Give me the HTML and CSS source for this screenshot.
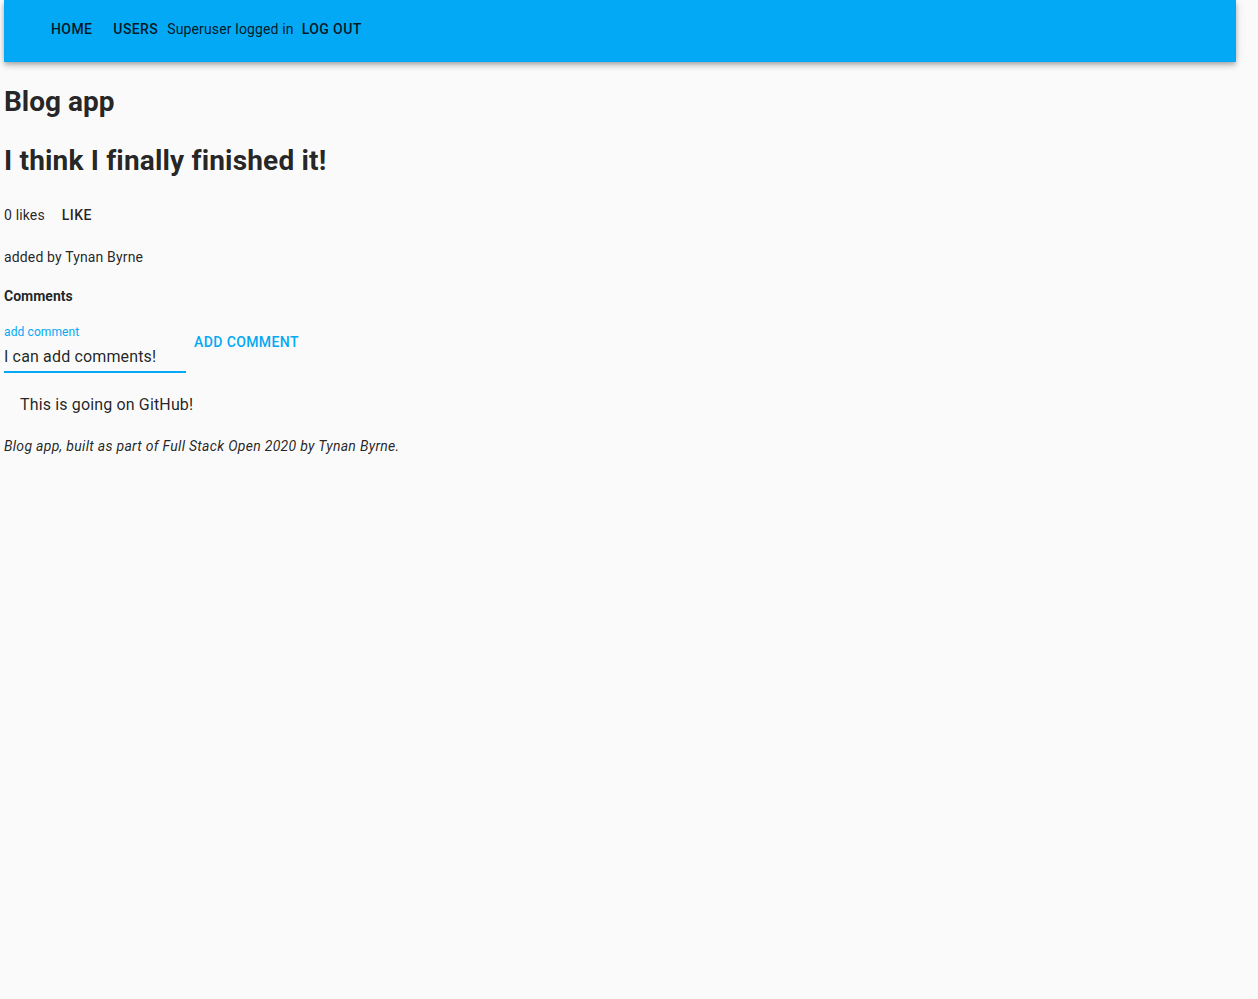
FILE: index.html
```html
<!DOCTYPE html>
<html lang="en">
<head>
<meta charset="utf-8">
<title>Blog app</title>
<link rel="stylesheet" href="styles.css">
</head>
<body>
<div class="page">
  <header class="appbar">
    <nav class="toolbar">
      <a class="btn nav-home" href="#">Home</a>
      <a class="btn nav-users" href="#">Users</a>
      <span class="user-info">Superuser logged in</span>
      <button class="btn nav-logout" type="button">Log out</button>
    </nav>
  </header>

  <h1 class="app-title">Blog app</h1>
  <h2 class="blog-title">I think I finally finished it!</h2>

  <div class="likes-row">
    <span class="likes">0 likes</span>
    <button class="btn like-btn" type="button">Like</button>
  </div>

  <div class="added-by">added by Tynan Byrne</div>

  <h3 class="comments-title">Comments</h3>

  <form class="comment-form">
    <div class="field">
      <label class="field-label" for="comment">add comment</label>
      <input class="field-input" id="comment" type="text" value="I can add comments!">
    </div>
    <button class="btn add-btn" type="button">Add comment</button>
  </form>

  <ul class="comment-list">
    <li class="comment-item">This is going on GitHub!</li>
  </ul>

  <footer class="footer">Blog app, built as part of Full Stack Open 2020 by Tynan Byrne.</footer>
</div>
</body>
</html>
```

FILE: styles.css
```css
html, body {
  margin: 0;
  padding: 0;
  background: #fafafa;
}

body {
  font-family: Roboto, "Liberation Sans", Arial, sans-serif;
  color: rgba(0, 0, 0, 0.87);
  font-variant-ligatures: none;
}

.page {
  padding: 0 22px 0 4px;
}

.appbar {
  background: #03a9f4;
  height: 62px;
  box-shadow: 0 2px 4px -1px rgba(0, 0, 0, 0.2),
              0 4px 5px 0 rgba(0, 0, 0, 0.14),
              0 1px 10px 0 rgba(0, 0, 0, 0.12);
}

.toolbar {
  height: 62px;
  box-sizing: border-box;
  display: flex;
  align-items: center;
  padding: 0 0 4px 39px;
  font-size: 14px;
  line-height: 20px;
}

.btn {
  font-family: inherit;
  font-size: 14px;
  font-weight: 500;
  line-height: 20px;
  letter-spacing: 0.02857em;
  text-transform: uppercase;
  text-decoration: none;
  color: rgba(0, 0, 0, 0.87);
  background: none;
  border: 0;
  padding: 0 8px;
  margin: 0;
  cursor: pointer;
}

.nav-users {
  margin-left: 5px;
}

.user-info {
  margin-left: 1px;
  font-weight: 400;
  letter-spacing: 0.01071em;
}

.nav-logout {
  margin-left: 0;
}

.app-title,
.blog-title {
  font-size: 28px;
  font-weight: 700;
  line-height: 34px;
  margin: 0;
}

.app-title {
  margin-top: 23px;
}

.blog-title {
  margin-top: 25px;
  letter-spacing: 0.006em;
}

.likes-row {
  display: flex;
  align-items: baseline;
  margin-top: 27px;
  font-size: 14px;
  line-height: 20px;
  letter-spacing: 0.01071em;
}

.like-btn {
  margin-left: 9px;
}

.added-by {
  margin-top: 22px;
  font-size: 14px;
  line-height: 20px;
  letter-spacing: 0.01071em;
}

.comments-title {
  margin: 19px 0 0;
  font-size: 14px;
  font-weight: 700;
  line-height: 20px;
}

.comment-form {
  display: flex;
  align-items: flex-start;
  margin-top: 18px;
}

.field {
  display: flex;
  flex-direction: column;
  width: 182px;
}

.field-label {
  font-size: 12px;
  line-height: 16px;
  color: #03a9f4;
  letter-spacing: 0.00938em;
}

.field-input {
  margin-top: 7px;
  font-family: inherit;
  font-size: 16px;
  line-height: 19px;
  height: 19px;
  padding: 0 0 5px;
  border: 0;
  border-bottom: 2px solid #03a9f4;
  background: transparent;
  color: rgba(0, 0, 0, 0.87);
  letter-spacing: 0.00938em;
  outline: none;
  width: 100%;
}

.add-btn {
  color: #03a9f4;
  margin-top: 8px;
}

.comment-list {
  list-style: none;
  margin: 20px 0 0;
  padding: 0;
}

.comment-item {
  padding-left: 16px;
  font-size: 16px;
  line-height: 24px;
  letter-spacing: 0.00938em;
}

.footer {
  margin-top: 19px;
  font-size: 14px;
  font-style: italic;
  line-height: 20px;
  letter-spacing: 0.3px;
}
```
